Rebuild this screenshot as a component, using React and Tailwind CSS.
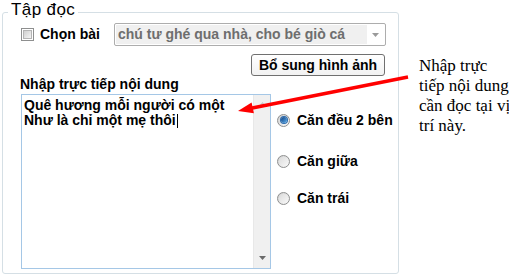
export default function App() {
  const Radio = ({ checked }) => (
    <div className="w-[13px] h-[13px] rounded-full border border-[#8e8f8f] bg-gradient-to-br from-[#d0d0d0] to-[#fbfbfb] flex items-center justify-center shrink-0">
      {checked ? (
        <div className="w-[6px] h-[6px] rounded-full bg-gradient-to-br from-[#0d3f82] to-[#5fb0ec] ring-1 ring-[#2b6aad]" />
      ) : (
        <div className="w-[9px] h-[9px] rounded-full bg-gradient-to-br from-[#dcdcdc] to-[#f7f7f7]" />
      )}
    </div>
  );

  return (
    <div className="relative w-[509px] h-[276px] bg-white overflow-hidden font-['Liberation_Sans',Arial,sans-serif] text-black">
      <div className="relative ml-[2px] mt-[12px] w-[397px] h-[262px] border border-[#d5dfe5] rounded-[3px] flex flex-col">
        <div className="absolute left-[5px] top-[-13px] px-[3px] bg-white text-[17px] leading-[20px] tracking-[0.4px] whitespace-nowrap">
          Tập đọc
        </div>

        {/* Row 1 */}
        <div className="flex items-center h-[23px] mt-[10px] pl-[18px]">
          <div className="flex items-center w-[93px] shrink-0">
            <div className="w-[13px] h-[13px] border border-[#8e8f8f] bg-white flex items-center justify-center">
              <div className="w-[9px] h-[9px] border border-[#b4b4b4] bg-gradient-to-br from-[#cfcfcf] to-[#f4f4f4]" />
            </div>
            <span className="ml-[6px] text-[14px] font-bold whitespace-nowrap">Chọn bài</span>
          </div>
          <div className="w-[272px] h-[23px] border border-[#adadad] rounded-[2px] flex p-[1px] bg-white">
            <div className="flex-1 bg-[#f0f0f0] text-[#6e6e6e] font-bold text-[14px] leading-[19px] pl-[2px] whitespace-nowrap overflow-hidden">
              chú tư ghé qua nhà, cho bé giò cá
            </div>
            <div className="w-[17px] flex items-center justify-center">
              <svg width="7" height="4" viewBox="0 0 7 4">
                <polygon points="0,0 7,0 3.5,4" fill="#9a9a9a" />
              </svg>
            </div>
          </div>
        </div>

        {/* Button row */}
        <div className="flex justify-end pr-[13px] mt-[8px]">
          <div className="w-[134px] h-[22px] border border-[#707070] rounded-[3px] bg-gradient-to-b from-white to-[#f2f2f2] text-[14px] font-bold leading-[20px] text-center whitespace-nowrap">
            Bổ sung hình ảnh
          </div>
        </div>

        {/* Label */}
        <div className="pl-[17px] text-[14px] font-bold leading-[16px] h-[16px] whitespace-nowrap">
          Nhập trực tiếp nội dung
        </div>

        {/* Textarea + radios */}
        <div className="flex mt-[2px] pl-[18px]">
          <div className="w-[250px] h-[175px] border border-[#a5c7e6] flex bg-white">
            <div className="flex-1 pl-[2px] pt-[3px] text-[14px] font-bold leading-[15px] whitespace-nowrap">
              <div>Quê hương mỗi người có một</div>
              <div className="flex items-center">
                Như là chỉ một mẹ thôi
                <span className="inline-block w-[1px] h-[14px] bg-black ml-[1px]" />
              </div>
            </div>
            <div className="w-[17px] bg-[#f0f0f0] border-l border-[#e8e8e8] flex flex-col items-center justify-between pt-[7px] pb-[8px]">
              <svg width="7" height="4" viewBox="0 0 7 4">
                <polygon points="0,4 7,4 3.5,0" fill="#c8c8c8" />
              </svg>
              <svg width="7" height="4" viewBox="0 0 7 4">
                <polygon points="0,0 7,0 3.5,4" fill="#6a6a6a" />
              </svg>
            </div>
          </div>

          <div className="ml-[6px] flex flex-col">
            <div className="flex items-center h-[16px] mt-[18px]">
              <Radio checked />
              <span className="ml-[7px] text-[14px] font-bold whitespace-nowrap">Căn đều 2 bên</span>
            </div>
            <div className="flex items-center h-[16px] mt-[25px]">
              <Radio />
              <span className="ml-[7px] text-[14px] font-bold whitespace-nowrap">Căn giữa</span>
            </div>
            <div className="flex items-center h-[16px] mt-[21px]">
              <Radio />
              <span className="ml-[7px] text-[14px] font-bold whitespace-nowrap">Căn trái</span>
            </div>
          </div>
        </div>
      </div>

      {/* Annotation */}
      <div className="absolute left-[419px] top-[56px] font-['Liberation_Serif','Times_New_Roman',serif] text-[17px] leading-[20px] text-black whitespace-nowrap">
        Nhập trực
        <br />
        tiếp nội dung
        <br />
        cần đọc tại vị
        <br />
        trí này.
      </div>

      {/* Red arrow */}
      <svg className="absolute left-0 top-0 pointer-events-none" width="509" height="276" viewBox="0 0 509 276">
        <line x1="408" y1="77" x2="251" y2="108.3" stroke="#ff0000" strokeWidth="3.5" />
        <polygon points="238,111 253.9,113.2 251.6,102.6" fill="#ff0000" />
      </svg>
    </div>
  );
}
